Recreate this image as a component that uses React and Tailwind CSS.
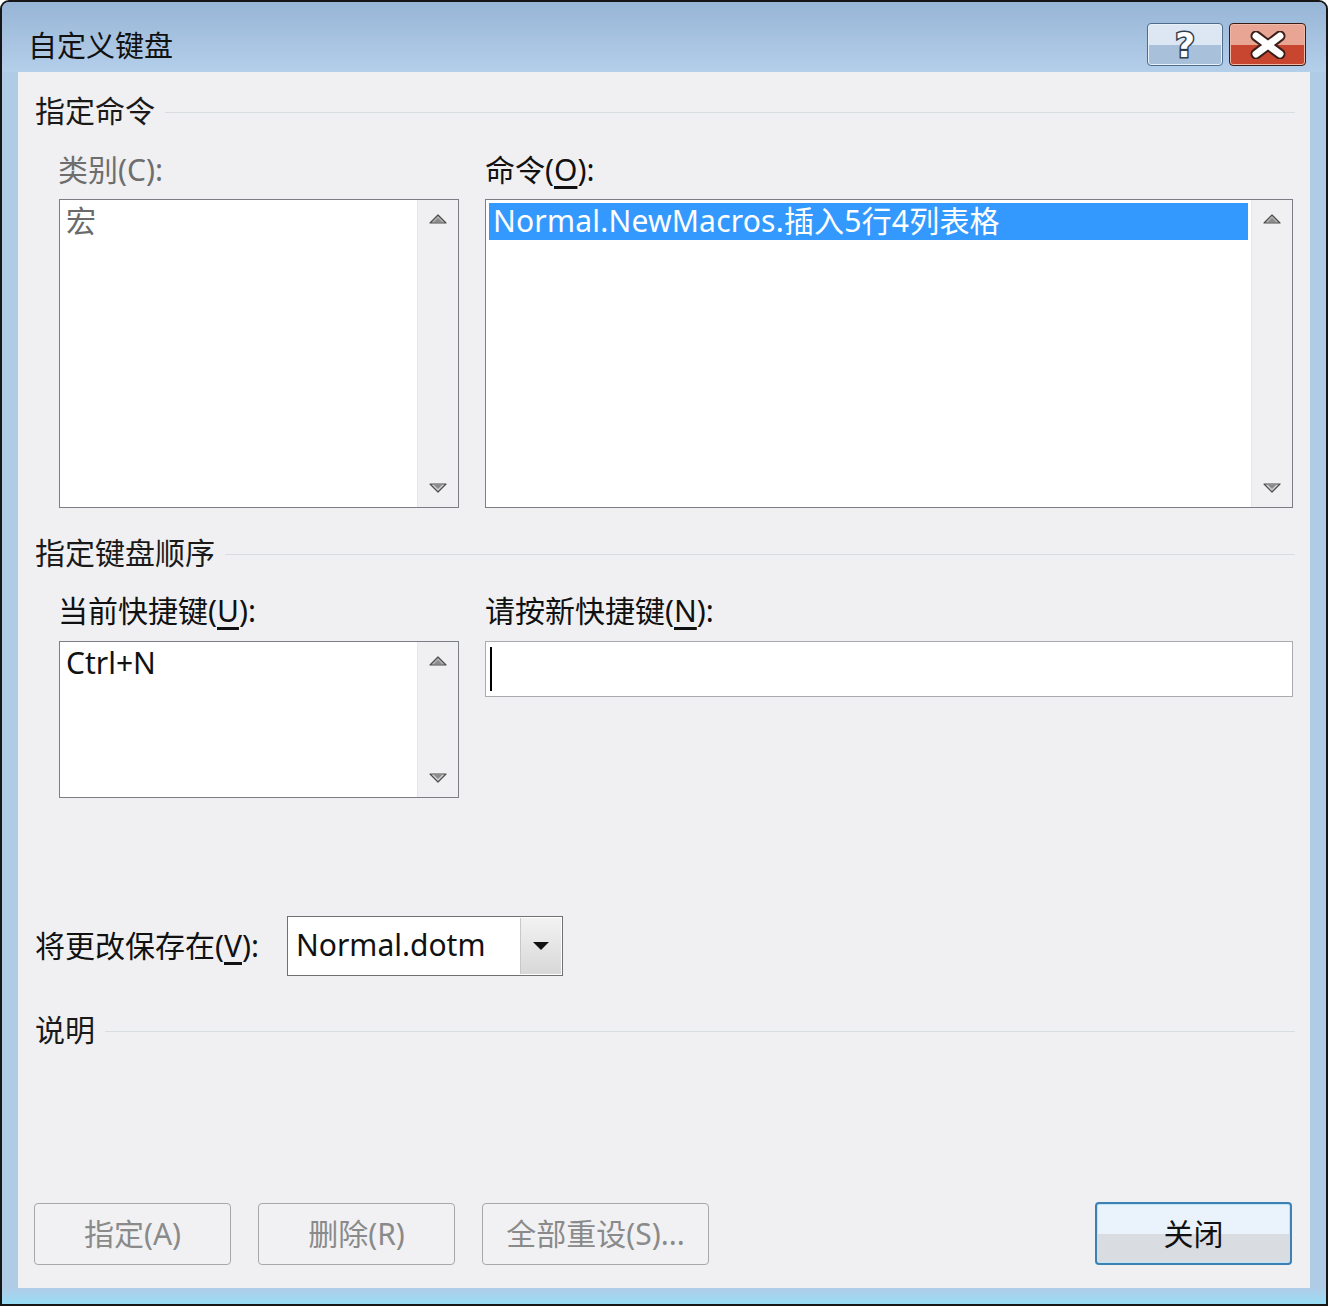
import React from "react";

const font = {
  fontFamily: '"Noto Sans", "Noto Sans CJK SC", sans-serif',
};

const ArrowUp = () => (
  <svg width="18" height="10" viewBox="0 0 18 10">
    <path d="M1 9 L9 1 L17 9 Z" fill="#b5b5b5" stroke="#4d4d4d" strokeWidth="1.2" strokeLinejoin="round" />
    <path d="M5 8 L9 4 L13 8 Z" fill="#8a8a8a" />
  </svg>
);

const ArrowDown = () => (
  <svg width="18" height="10" viewBox="0 0 18 10">
    <path d="M1 1 L9 9 L17 1 Z" fill="#d0d0d0" stroke="#4d4d4d" strokeWidth="1.2" strokeLinejoin="round" />
    <path d="M5 2 L9 6 L13 2 Z" fill="#8a8a8a" />
  </svg>
);

const Scrollbar = () => (
  <div className="w-[41px] flex flex-col items-center justify-between py-[14px] bg-[#f0f0f2] border-l border-[#e6e6e8]">
    <ArrowUp />
    <ArrowDown />
  </div>
);

const SectionHeader = ({ children }) => (
  <div className="flex items-center h-[36px] pl-[17px] pr-[15px]">
    <span className="text-[30px] leading-[36px] text-[#1a1a1a]">{children}</span>
    <div className="flex-1 h-px bg-[#d8dde2] ml-[10px] mt-[2px]" />
  </div>
);

const Btn = ({ children, width, primary }) => (
  <div
    className={
      primary
        ? "h-[63px] rounded-[4px] border-2 border-[#3c80b4] bg-gradient-to-b from-[#eaf3fb] from-50% to-[#d9dde2] to-50% flex items-center justify-center text-[30px] text-[#111] shadow-[inset_0_0_0_1px_#bfe3f7]"
        : "h-[62px] rounded-[4px] border border-[#a8a8a8] bg-[#f1f1f3] flex items-center justify-center text-[30px] text-[#8a8a8a]"
    }
    style={{ width }}
  >
    {children}
  </div>
);

export default function App() {
  return (
    <div className="w-[1328px] h-[1306px] bg-white" style={font}>
      <div className="w-[1328px] h-[1306px] border-2 border-[#161616] rounded-t-[9px] bg-[#afcbe6] flex flex-col overflow-hidden">
        {/* title bar */}
        <div className="h-[70px] flex items-start bg-gradient-to-b from-[#97b5d6] to-[#b4cfea] pl-[26px] pr-[20px]">
          <div className="text-[29px] leading-[36px] text-[#111] mt-[26px]">自定义键盘</div>
          <div className="flex-1" />
          <div className="mt-[21px] flex gap-[6px]">
            <div className="w-[76px] h-[43px] rounded-[4px] border border-[#4f6c8e] bg-gradient-to-b from-[#dce7f3] from-50% to-[#a9c0da] to-50% flex items-center justify-center shadow-[inset_0_0_0_1px_#e8f0f8]">
              <span
                className="text-[34px] leading-none font-bold text-white"
                style={{
                  WebkitTextStroke: "3px #2f3d4d",
                  paintOrder: "stroke fill",
                  fontFamily: '"DejaVu Sans", sans-serif',
                }}
              >
                ?
              </span>
            </div>
            <div className="w-[77px] h-[43px] rounded-[4px] border border-[#3a1c16] bg-gradient-to-b from-[#e9a594] from-50% to-[#c8462f] to-50% flex items-center justify-center shadow-[inset_0_0_0_1px_#f0b8a8]">
              <svg width="38" height="28" viewBox="0 0 38 28">
                <path d="M7 5 L31 23 M31 5 L7 23" stroke="#3a1f1a" strokeWidth="11" strokeLinecap="round" />
                <path d="M7 5 L31 23 M31 5 L7 23" stroke="#ffffff" strokeWidth="7" strokeLinecap="round" />
              </svg>
            </div>
          </div>
        </div>

        {/* body */}
        <div className="flex-1 flex px-[16px]">
          <div className="flex-1 bg-[#f0f0f2] flex flex-col pt-[21px]">
            <SectionHeader>指定命令</SectionHeader>

            <div className="flex pl-[41px] mt-[23px] gap-[26px]">
              <div className="w-[400px] flex flex-col">
                <div className="text-[30px] leading-[36px] text-[#6e6e6e] -ml-px">类别(C):</div>
                <div className="mt-[11px] h-[309px] border border-[#7b7f85] bg-white flex">
                  <div className="flex-1 pl-[6px] pt-[1px] text-[30px] leading-[40px] text-[#6a6a6a]">宏</div>
                  <Scrollbar />
                </div>
              </div>
              <div className="w-[808px] flex flex-col">
                <div className="text-[30px] leading-[36px] text-[#111]">
                  命令(<span className="underline underline-offset-[5px]">O</span>):
                </div>
                <div className="mt-[11px] h-[309px] border border-[#7b7f85] bg-white flex">
                  <div className="flex-1 p-[3px]">
                    <div className="h-[37px] bg-[#3399ff] text-white text-[30px] leading-[36px] pl-[4px] whitespace-nowrap tracking-[0.2px]">
                      Normal.NewMacros.插入5行4列表格
                    </div>
                  </div>
                  <Scrollbar />
                </div>
              </div>
            </div>

            <div className="mt-[27px]">
              <SectionHeader>指定键盘顺序</SectionHeader>
            </div>

            <div className="flex pl-[41px] mt-[22px] gap-[26px]">
              <div className="w-[400px] flex flex-col">
                <div className="text-[30px] leading-[36px] text-[#111] -ml-px">
                  当前快捷键(<span className="underline underline-offset-[5px]">U</span>):
                </div>
                <div className="mt-[12px] h-[157px] border border-[#7b7f85] bg-white flex">
                  <div className="flex-1 pl-[6px] pt-[1px] text-[30px] leading-[40px] text-[#111]">Ctrl+N</div>
                  <Scrollbar />
                </div>
              </div>
              <div className="w-[808px] flex flex-col">
                <div className="text-[30px] leading-[36px] text-[#111]">
                  请按新快捷键(<span className="underline underline-offset-[5px]">N</span>):
                </div>
                <div className="mt-[12px] h-[56px] border border-[#a9abae] bg-white pl-[4px] pt-[5px]">
                  <div className="w-[2px] h-[44px] bg-black" />
                </div>
              </div>
            </div>

            <div className="flex items-center pl-[17px] mt-[118px]">
              <div className="text-[30px] leading-[36px] text-[#111] w-[252px]">
                将更改保存在(<span className="underline underline-offset-[5px]">V</span>):
              </div>
              <div className="w-[276px] h-[60px] border border-[#707070] bg-white flex">
                <div className="flex-1 pl-[8px] text-[30px] leading-[56px] text-[#111]">Normal.dotm</div>
                <div className="w-[41px] my-[1px] mr-[1px] border-l border-[#c8c8c8] bg-gradient-to-b from-[#f2f2f2] to-[#d8d8d8] flex items-center justify-center">
                  <svg width="18" height="10" viewBox="0 0 18 10">
                    <path d="M1 1 L17 1 L9 9 Z" fill="#111" />
                  </svg>
                </div>
              </div>
            </div>

            <div className="mt-[36px]">
              <SectionHeader>说明</SectionHeader>
            </div>

            <div className="flex-1" />

            <div className="flex items-center pl-[16px] pr-[18px] pb-[23px]">
              <div className="flex gap-[27px]">
                <Btn width={197}>指定(A)</Btn>
                <Btn width={197}>删除(R)</Btn>
                <Btn width={227}>全部重设(S)...</Btn>
              </div>
              <div className="flex-1" />
              <Btn width={197} primary>
                关闭
              </Btn>
            </div>
          </div>
        </div>

        {/* bottom frame */}
        <div className="h-[16px] bg-gradient-to-b from-[#b0cce8] to-[#97dcf5]" />
      </div>
    </div>
  );
}
